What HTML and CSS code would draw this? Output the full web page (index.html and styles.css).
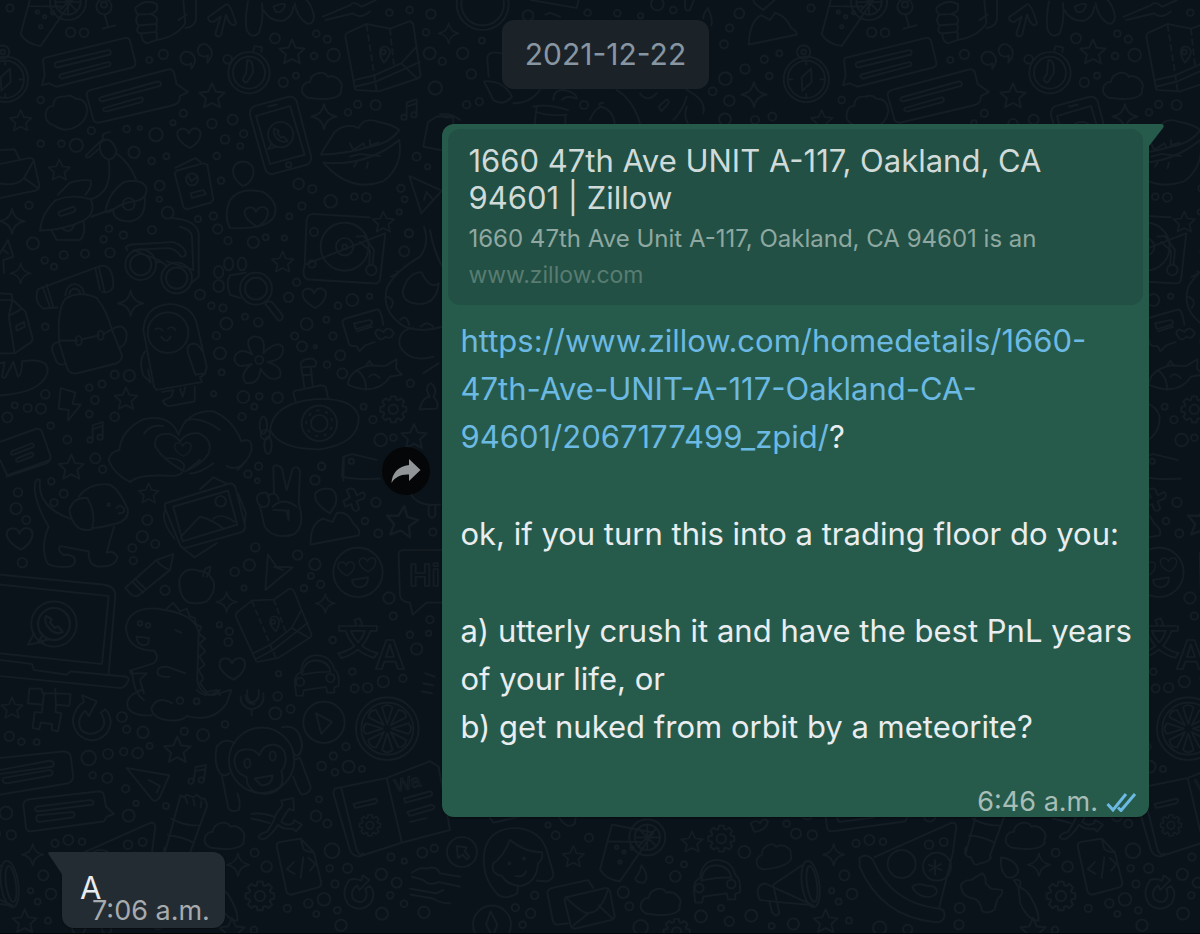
FILE: index.html
```html
<!DOCTYPE html>
<html lang="en">
<head>
<meta charset="utf-8">
<meta name="viewport" content="width=device-width, initial-scale=1">
<title>Chat</title>
<link rel="stylesheet" href="styles.css">
</head>
<body>
<svg class="wallpaper" aria-hidden="true">
  <defs>
    <path id="star" d="M0-40L11-15 38-12 18 6 24 32 0 19-24 32-18 6-38-12-11-15z"/>
    <path id="spark" d="M0-38Q5-5 38 0Q5 5 0 38Q-5 5-38 0Q-5-5 0-38z"/>
    <path id="heart" d="M4 30C-46 4-40-28-18-28Q-4-28 0-14Q8-32 25-28C46-20 35 14 4 30z"/>
    <g id="note"><path d="M-8 22V-20L22-30V14M-8-8L22-18"/><circle cx="-16" cy="24" r="8"/><circle cx="14" cy="16" r="8"/></g>
    <path id="cloud" d="M-45 35C-75 20-60-15-38-12C-35-40 5-50 15-28C40-35 65-10 55 10C60 35 20 46-45 35z"/>
    <g id="gear"><path d="M39-7L39 7 29 9 27 14 33 23 23 33 14 27 9 29 7 39-7 39-9 29-14 27-23 33-33 23-27 14-29 9-39 7-39-7-29-9-27-14-33-23-23-33-14-27-9-29-7-39 7-39 9-29 14-27 23-33 33-23 27-14 29-9z"/><circle r="14"/></g>
    <g id="phone"><circle r="40"/><path d="M-28 28L-40 46-14 38M-20-20C-30 0 0 32 22 20L10 6 2 10-10-4-6-12z"/></g>
    <g id="chat-left"><path d="M-132-32L110-92Q122-94 126-84L142-20Q144-8 134-4L-94 54-118 44-138 50-130 20-134-16Q-136-28-132-32zM-98-18L62-56Q72-54 66-42L-92-4Q-104-6-98-18zM-84 18L62-20Q72-16 64-8L-78 30Q-90 26-84 18z"/></g>
    <g id="chat-right"><path d="M-128-18L106-80Q118-82 122-70L130-36 164-12 140 0 138 14Q130 26 118 28L-102 80Q-118 80-120 70L-140-2Q-140-14-128-18zM-98 4L74-44Q88-42 80-30L-94 16Q-108 12-98 4zM-88 36L24 4Q32 6 26 18L-80 46Q-96 46-88 36z"/></g>
    <g id="map"><path d="M-106-78L-48-104 22-90 80-112Q90-110 92-102L114 50Q112 58 104 60L-10 98-78 94Q-84 92-84 84L-112-66Q-112-74-106-78zM-84 64L-24 50 56 14 98-32M-82 84L-18 68 112 10M56 14L102 58"/><path stroke-dasharray="16 14" d="M-48-100L-18 96M22-88L34 20"/><path d="M4 12C-30-36 16-50 22-22Q22-8 4 12z"/><circle cx="2" cy="-20" r="7"/></g>
    <g id="car"><path d="M-62 14Q-66-14-44-24Q-38-76 4-78Q50-78 62-34Q80-20 76 18L62 24V40H40L36 22-34 32-38 50H-58zM-40-16Q-34-62 4-62Q44-60 50-26Q0-26-40-16z"/><circle cx="-46" cy="6" r="13"/><circle cx="50" cy="-6" r="13"/></g>
    <g id="doc"><path d="M-58-62Q-58-72-48-74L14-84 54-42 76 48Q76 58 68 62L-14 84Q-24 84-28 76zM14-84L22-54Q28-46 54-42M-6-14L-28 8-4 22M22-28L14 34M38-26L58-8 42 12"/></g>
    <g id="glass"><path d="M-60-104L64-80-36 66Q-80 60-96 30zM-74-54L26-52"/><circle cx="46" cy="-66" r="54"/><circle cx="46" cy="-66" r="38"/><path d="M46-100V-32M12-66H80M22-90L70-42M22-42L70-90"/><circle cx="-46" cy="-36" r="5"/><circle cx="-24" cy="-22" r="5"/><circle cx="-36" cy="8" r="5"/><circle cx="0" cy="-34" r="5"/></g>
    <g id="compass"><circle r="68"/><circle r="56"/><circle cx="-8" cy="-82" r="20"/><circle cx="-8" cy="-82" r="7"/><path d="M14-32L16 8-12 34-14-6zM0-54V-44M52 0H42M0 54V44M-52 0H-42"/></g>

    <g id="doodles" class="doodles">
      <g transform="scale(.3333)">
        <use href="#glass" x="158" y="72"/>
        <circle cx="312" cy="20" r="23"/><circle cx="312" cy="14" r="9"/><path d="M314 44L324 80M308 86L346 76"/>
        <path d="M410 20Q440-4 470 12 478 36 450 42L414 44Q400 26 410 20zM414 44Q402 66 416 76L468 72Q480 50 450 42M416 76Q404 100 424 100L466 96Q474 84 468 72M424 100Q424 126 442 130L470 120V98M470 120Q530 110 556 70L550 0M536 60L560 44M556 84Q590 80 588 50V0"/>
        <path d="M624 52L680 12Q692 14 708 70 700 84 686 64L678 44 664 104Q654 116 646 102L662 50 640 66Q624 66 624 52z"/>
        <path d="M744 4Q734 60 740 90 754 118 776 100 792 60 786 10M790 30Q810 66 850 62 878 50 880 20M820 20Q850 6 856 14 850 40 828 36zM884 10Q890 50 920 70 940 76 942 50 938 20 920 0"/>
        <path d="M968 50L1050 16Q1060 0 1084 20L1128 0M976 60L1060 40Q1080 60 1110 34"/>
        <use href="#chat-left" x="264" y="206"/><use href="#chat-right" x="400" y="288"/>
        <path d="M574 206Q588 190 584 174 574 150 552 156 534 170 546 188 560 200 574 190zM622 188Q640 168 634 150 620 124 600 136 586 152 600 166 614 174 624 166z"/>
        <use href="#compass" x="16" y="238"/>
        <circle cx="747" cy="218" r="62"/><circle cx="747" cy="218" r="48"/><path d="M742 180Q762 180 758 220L740 248Q720 244 738 222zM760 152L764 138 786 142 784 156"/><circle cx="683" cy="178" r="13"/>
        <use href="#star" x="876" y="158"/><use href="#star" x="636" y="290"/><use href="#cloud" x="968" y="258"/><use href="#map" x="1148" y="176"/>
        <path d="M166 378Q130 366 138 336 142 318 160 318 160 286 196 290 212 282 226 296 260 296 262 334 256 370 220 384 190 396 166 378z"/>
        <use href="#star" transform="translate(62 364)scale(.85)"/><use href="#star" transform="translate(178 512)scale(.85)"/>
        <use href="#heart" x="566" y="414"/><use href="#spark" x="972" y="350"/><use href="#note" x="1228" y="328"/>
        <path d="M764 318L868 290Q884 290 890 304L934 472Q934 486 922 494L818 522Q802 524 796 508L750 346Q748 324 764 318zM768 348L870 318 914 464 810 492zM804 320L830 314"/><use href="#phone" transform="translate(842 404)scale(.95)"/><circle cx="866" cy="494" r="8"/>
        <path d="M962 464Q976 440 1004 396 1040 366 1076 384 1090 352 1130 364 1186 376 1198 390 1170 430 1110 440 1040 462 962 464zM970 488Q1100 500 1198 420 1210 500 1150 544 1050 580 970 488zM1050 430L1060 450 1090 430 1096 444M1110 420V436L1136 428M1050 470L1080 462 1140 468M1062 500L1070 488M1100 504L1104 488"/>
        <path d="M0 450L44 448 60 480M0 492L88 474Q100 474 102 484L118 556Q116 570 106 572L0 594M102 480L72 534 116 566M0 550Q50 560 72 534"/>
        <path d="M258 466L310 416Q300 400 330 396M258 466Q256 476 270 470L300 444M300 430Q330 400 350 452 344 480 322 478 296 466 300 430zM350 460Q390 490 408 538M326 480Q340 580 272 598M174 584L210 548Q250 536 272 542 278 560 256 584M120 692Q124 640 168 600 220 580 272 598 290 640 250 662 190 690 120 692zM176 636L220 620Q232 630 220 636L184 648Q172 646 176 636zM250 662Q260 700 240 720H170L154 690M274 650L344 626M316 636Q324 580 372 546 430 534 440 566 440 600 400 604 370 606 328 636zM340 632Q340 664 392 664 440 656 434 590"/><circle cx="386" cy="612" r="18"/><path d="M188 686Q210 704 222 676"/>
        <path d="M530 512L610 490 622 494 640 600 632 608 562 628Q552 628 550 620L524 520zM526 504L586 474 602 486M572 580L610 570 618 582 576 594z"/><circle cx="576" cy="538" r="18"/><path d="M566 530L574 544 592 530"/>
        <path d="M728 558Q690 530 702 500 716 478 744 488 768 500 758 530 746 556 728 558zM690 684Q670 650 690 600 720 560 790 576 840 610 822 650 800 690 690 684z"/><use href="#heart" x="768" y="650"/>
        <path d="M1228 528L1326 572 1264 640zM1272 600L1280 576 1300 600"/>
        <path d="M1270 440L1284 366 1310 350 1360 348M1270 440L1330 452"/>
        <use href="#spark" x="36" y="664"/>
        <circle cx="30" cy="24" r="11"/><circle cx="212" cy="97" r="14"/><circle cx="252" cy="98" r="13"/><circle cx="448" cy="180" r="9"/><circle cx="490" cy="163" r="14"/><circle cx="825" cy="115" r="15"/><circle cx="942" cy="168" r="10"/><circle cx="1001" cy="165" r="19"/><circle cx="850" cy="247" r="14"/><circle cx="888" cy="227" r="9"/><circle cx="949" cy="101" r="10"/><circle cx="982" cy="118" r="11"/><circle cx="1168" cy="38" r="10"/><circle cx="1229" cy="30" r="10"/><circle cx="1293" cy="42" r="14"/><circle cx="1289" cy="160" r="18"/><circle cx="1278" cy="97" r="10"/><circle cx="1327" cy="184" r="11"/><circle cx="1306" cy="264" r="20"/><circle cx="122" cy="300" r="10"/><circle cx="122" cy="431" r="10"/><circle cx="184" cy="431" r="10"/><circle cx="229" cy="436" r="20"/><circle cx="274" cy="392" r="11"/><circle cx="380" cy="387" r="10"/><circle cx="419" cy="384" r="6"/><circle cx="468" cy="404" r="20"/><circle cx="402" cy="457" r="17"/><circle cx="550" cy="340" r="11"/><circle cx="519" cy="368" r="8"/><circle cx="636" cy="371" r="14"/><circle cx="698" cy="359" r="15"/><circle cx="675" cy="418" r="13"/><circle cx="731" cy="401" r="11"/><circle cx="721" cy="438" r="9"/><circle cx="650" cy="468" r="10"/><circle cx="499" cy="469" r="9"/><circle cx="455" cy="483" r="10"/><circle cx="479" cy="557" r="15"/><circle cx="478" cy="598" r="8"/><circle cx="503" cy="638" r="18"/><circle cx="594" cy="657" r="9"/><circle cx="640" cy="648" r="11"/><circle cx="653" cy="687" r="14"/><circle cx="663" cy="542" r="10"/><circle cx="896" cy="552" r="16"/><circle cx="937" cy="567" r="12"/><circle cx="992" cy="604" r="19"/><circle cx="906" cy="618" r="11"/><circle cx="868" cy="649" r="9"/><circle cx="1063" cy="590" r="10"/><circle cx="1099" cy="592" r="13"/><circle cx="1203" cy="565" r="11"/><circle cx="1250" cy="470" r="12"/><circle cx="1283" cy="500" r="8"/><circle cx="1214" cy="598" r="9"/><circle cx="1198" cy="636" r="8"/><circle cx="1073" cy="313" r="11"/><circle cx="1127" cy="315" r="15"/><circle cx="1044" cy="337" r="10"/><circle cx="87" cy="616" r="11"/><circle cx="327" cy="686" r="10"/><circle cx="456" cy="690" r="12"/><circle cx="1227" cy="700" r="12"/>
      </g>
      <g transform="translate(0 230)scale(.3333)">
        <path d="M914 104L920-30Q922-48 940-48L1110-38M1156 10L1140 150Q1136 162 1122 160L922 148Q904 140 914 104z"/><circle cx="1034" cy="50" r="72"/><circle cx="1034" cy="50" r="26"/><circle cx="1034" cy="50" r="7"/><circle cx="936" cy="102" r="11"/><circle cx="942" cy="6" r="12"/><circle cx="1114" cy="120" r="16"/><path d="M1070 20L1092 18 1122 60 1118 104M1080 36L1110 62 1108 104"/><use href="#star" transform="translate(1150-22)scale(.85)"/>
        <path d="M114 178L300 108Q340 100 340 170 330 192 306 186M114 178Q100 214 130 236L172 232M128 170L150 232M140 164L160 232M286 114L300 180M296 110L314 186M196 196Q200 162 224 162 250 166 252 192M208 192Q212 176 226 176 240 180 240 190"/>
        <path d="M178 340Q170 240 196 206 240 180 290 204 320 240 336 300L366 376Q366 392 350 400L230 430Q208 432 202 416zM178 332L232 332M246 328L296 316M310 312L336 298Q370 276 380 310 382 340 362 352M176 336Q150 340 158 366L170 396Q180 408 194 402"/><ellipse cx="236" cy="332" rx="9" ry="14"/><ellipse cx="302" cy="316" rx="9" ry="14"/>
        <circle cx="422" cy="104" r="46"/><circle cx="422" cy="104" r="32"/><circle cx="530" cy="144" r="46"/><circle cx="530" cy="144" r="32"/><path d="M468 98Q486 90 500 110M382 60Q370 50 392 44L520 36Q556 50 558 72 550 86 540 76 526 54 500 54L400 60 480 92M516-36Q590-30 596 10V140L576 158M576 20L580 120 500 94M540-10Q576 0 576 20"/>
        <use href="#spark" x="392" y="220"/><use href="#spark" transform="translate(62 130)scale(.8)"/>
        <path d="M0 70L24 30 40 80 10 90 12 130M10 60L24 70"/>
        <path d="M462 470L430 300Q436 226 510 222 576 226 590 280L620 410Q618 436 600 442L606 456 470 480zM436 364Q414 390 430 436L452 458 444 420M566 346Q560 360 566 376L586 434 616 430 M566 346Q590 330 606 362M486 486L520 480 514 500 488 512Q494 528 510 528L584 514V470M540 476L548 500 556 472"/><circle cx="504" cy="308" r="61"/><path d="M466 298Q480 290 488 302M504 296Q520 286 526 300M484 320Q500 344 512 320"/>
        <circle cx="768" cy="176" r="48"/><circle cx="768" cy="176" r="33"/><path d="M796 222Q800 210 816 216L848 256Q850 272 836 272zM738 128L690 136Q676 160 690 194L720 204"/><ellipse cx="686" cy="102" rx="14" ry="19"/><ellipse cx="726" cy="102" rx="13" ry="19"/><ellipse cx="656" cy="126" rx="14" ry="18"/><ellipse cx="656" cy="168" rx="16" ry="18"/>
        <use href="#star" transform="translate(848 98)scale(.85)"/><use href="#heart" x="942" y="204"/>
        <path d="M758 374Q730 330 760 320 800 316 790 370 830 330 848 350 856 390 802 396 850 410 840 440 810 462 782 416 776 468 736 458 718 430 756 402 700 420 704 380 720 350 758 374z"/><circle cx="778" cy="390" r="12"/>
        <path d="M0 190L34 192 38 210 0 210M38 210L76 244 98 326 94 336 44 370H0M38 210L26 258 44 370M26 258L66 236M48 288L72 276 74 290 50 302z"/>
        <path d="M0 400L14 396 6 440Q16 450 22 430L40 396M40 396L54 440Q66 436 66 396M66 394Q150 380 142 430 120 490 0 496"/>
        <path d="M182 474L226 488 218 522 242 524 204 572 206 540 176 536z"/><use href="#star" transform="translate(378 508)scale(.9)"/><use href="#note" x="286" y="606"/><use href="#star" x="214" y="714"/>
        <path d="M0 636L110 596Q122 596 126 606L152 680Q150 694 140 700L20 740M36 664L96 640Q106 644 98 652L40 674Q28 676 36 664zM50 686L94 668Q106 670 96 680L54 696Q44 694 50 686z"/>
        <path d="M326 690Q330 666 358 660 364 600 430 568 510 550 536 614 560 540 640 544 700 570 724 634 760 620 754 664 740 700 712 720M432 612Q450 582 490 588M556 572Q600 556 660 600M546 720Q490 690 466 650 460 606 510 612 530 620 540 634 560 606 596 610 640 630 626 670 610 700 556 724M326 690Q340 730 390 756"/><use href="#heart" transform="translate(548 658)scale(.7)"/>
        <path d="M810 600Q820 520 940 508 1060 500 1076 560 1080 640 960 658 840 660 810 600zM880 490Q880 480 900 480L960 466Q976 466 978 474L984 504M880 490L888 516M914 476L902 400Q910 384 940 386 956 400 944 410L932 410 938 466M904 412L932 410M908 436L936 434"/><circle cx="958" cy="580" r="53"/><circle cx="958" cy="580" r="25"/><path stroke-dasharray="5 22" d="M919 580A39 39 0 1 1 997 580A39 39 0 1 1 919 580"/><ellipse cx="790" cy="586" rx="11" ry="26"/><ellipse cx="804" cy="646" rx="11" ry="26"/><circle cx="796" cy="614" r="14"/>
        <path d="M1036 266L1132 238Q1144 240 1150 284M1036 266Q1026 270 1028 280L1048 344Q1054 350 1070 348L1078 364 1096 346 1124 336M1062 280L1110 270Q1122 276 1112 284L1068 298zM1072 304L1116 290M1126 310Q1130 290 1150 306 1166 284 1182 310 1172 330 1156 320 1140 340 1126 310z"/>
        <path d="M1044 464Q1046 420 1110 406L1156 408 1190 388 1188 416 1206 434 1170 440Q1130 500 1044 464zM1070 420Q1100 440 1098 480M1098 408L1108 392 1120 408M1108 440Q1120 424 1140 444"/>
        <use href="#gear" x="1180" y="538"/><use href="#star" x="1242" y="622"/>
        <path d="M1272-10Q1290 40 1260 80 1190 120 1162 170 1140 240 1210 288 1260 310 1327 290M1208 186Q1220 130 1264 126 1290 180 1316 160 1310 220 1260 222 1210 220 1208 186zM1200 350Q1190 300 1240 294M1200 350Q1230 400 1300 380M1172 140Q1200 130 1190 124M1160 200Q1190 210 1172 234M1200 270Q1220 250 1228 286M1262 290Q1280 270 1300 290M1270 430L1316 400M1290 0Q1300 60 1327 110"/>
        <path d="M1258 538Q1270 500 1290 500 1270 470 1294 460 1316 480 1300 500 1320 520 1310 536z"/>
        <path d="M1030 752L1032 680 1056 672 1130 690"/><circle cx="1054" cy="694" r="8"/>
        <circle cx="99" cy="40" r="18"/><circle cx="134" cy="91" r="10"/><circle cx="162" cy="110" r="9"/><circle cx="191" cy="75" r="12"/><circle cx="255" cy="71" r="12"/><circle cx="330" cy="68" r="14"/><circle cx="311" cy="28" r="10"/><circle cx="370" cy="15" r="11"/><circle cx="136" cy="290" r="10"/><circle cx="600" cy="194" r="15"/><circle cx="634" cy="227" r="10"/><circle cx="669" cy="234" r="11"/><circle cx="735" cy="260" r="9"/><circle cx="775" cy="277" r="13"/><circle cx="679" cy="281" r="18"/><circle cx="649" cy="317" r="11"/><circle cx="660" cy="370" r="18"/><circle cx="665" cy="427" r="9"/><circle cx="684" cy="32" r="11"/><circle cx="760" cy="37" r="17"/><circle cx="797" cy="22" r="9"/><circle cx="853" cy="24" r="8"/><circle cx="890" cy="157" r="11"/><circle cx="866" cy="202" r="14"/><circle cx="920" cy="282" r="18"/><circle cx="979" cy="269" r="9"/><circle cx="1014" cy="227" r="10"/><circle cx="1057" cy="210" r="18"/><circle cx="1109" cy="199" r="8"/><circle cx="884" cy="318" r="11"/><circle cx="906" cy="349" r="15"/><circle cx="946" cy="350" r="5"/><circle cx="999" cy="318" r="11"/><circle cx="1021" cy="376" r="15"/><circle cx="981" cy="404" r="10"/><circle cx="1027" cy="430" r="15"/><circle cx="833" cy="503" r="16"/><circle cx="778" cy="499" r="10"/><circle cx="730" cy="501" r="18"/><circle cx="763" cy="530" r="9"/><circle cx="726" cy="560" r="11"/><circle cx="641" cy="491" r="8"/><circle cx="344" cy="434" r="12"/><circle cx="388" cy="437" r="17"/><circle cx="306" cy="462" r="11"/><circle cx="268" cy="473" r="10"/><circle cx="285" cy="510" r="12"/><circle cx="268" cy="552" r="10"/><circle cx="344" cy="560" r="13"/><circle cx="136" cy="493" r="13"/><circle cx="123" cy="536" r="15"/><circle cx="83" cy="534" r="12"/><circle cx="44" cy="526" r="9"/><circle cx="22" cy="562" r="15"/><circle cx="152" cy="587" r="10"/><circle cx="202" cy="629" r="12"/><circle cx="286" cy="685" r="15"/><circle cx="1231" cy="460" r="11"/><circle cx="1091" cy="530" r="9"/><circle cx="1119" cy="569" r="11"/><circle cx="1142" cy="630" r="19"/><circle cx="1180" cy="623" r="10"/><circle cx="1227" cy="10" r="12"/><circle cx="1213" cy="64" r="15"/><circle cx="965" cy="709" r="11"/>
      </g>
      <g transform="translate(0 460)scale(.3333)">
        <path d="M0 0L22 46 150 0M390 66Q420 40 520 48 556 44 552 14 540-6 500-6M564 28L600 0M570 40Q600 40 640 10M680 18Q710 36 736 4M1030-10L1026 50Q1060 60 1140 56"/>
        <path d="M120 60Q104 50 104 90 110 140 146 200 120 260 142 310 160 324 210 320 234 310 220 290 200 280 192 286 170 270 180 258L266 274Q264 320 300 320 350 320 352 290 340 270 320 278 330 240 342 200M120 60Q110 140 210 176M208 150Q220 110 262 114 290 160 276 208 220 220 208 150zM236 110Q270 66 330 74 360 90 384 150 386 180 350 190 300 204 276 204M350 144Q360 130 370 144 380 160 356 160"/><circle cx="326" cy="134" r="4"/>
        <use href="#heart" transform="translate(58 236)scale(1.1)"/><use href="#star" transform="translate(446 102)scale(.8)"/>
        <path d="M496 130L690 70Q700 70 706 80L736 200Q734 212 726 216L556 264Q544 264 540 254L494 142zM520 140L684 92 712 194 548 244zM600 88L640 52 682 72M550 266L584 292 650 250M496 150Q480 180 524 236M714 100L738 160 734 190M546 226L600 170Q640 180 670 206M640 176Q664 156 704 186"/><circle cx="662" cy="124" r="16"/>
        <path d="M822 100L820 20Q834 10 846 26L860 90 878 26Q896 14 900 36L896 130Q918 200 880 224 820 240 794 200L780 140M772 124Q766 96 800 98 814 120 802 138 780 148 772 124zM802 108Q830 90 836 120M818 140Q850 110 890 140M820 150L860 152 866 180M866 150V180"/>
        <path d="M990 160Q940 130 946 100 964 80 996 88 1016 104 1006 136zM932 254Q930 190 970 176L998 186 1010 160Q1040 150 1060 190 1084 210 1076 226zM1030 124L1050 112 1040 90Q1056 80 1064 90L1070 106 1090 96Q1100 106 1090 116L1070 124 1078 146Q1066 160 1058 146L1054 132 1036 140z"/>
        <use href="#star" transform="translate(1206 188)rotate(8)scale(1.25)"/><path d="M1232 100Q1250 140 1320 134M1286 134V166Q1296 180 1306 166V134"/>
        <path d="M376 384L470 300 520 282 510 330 416 406Q404 412 394 404zM396 364L430 398M404 356L438 388M470 300Q480 320 510 330"/>
        <path d="M590 330Q550 320 538 360 536 410 566 428 600 434 620 424 646 400 642 368 624 330 600 334zM610 350Q606 324 632 320 630 340 620 350"/>
        <path d="M804 284L830 320 878 322 796 390zM822 320L850 330"/>
        <use href="#spark" transform="translate(680 426)scale(.8)"/><use href="#spark" transform="translate(976 430)scale(.75)"/>
        <circle cx="1074" cy="337" r="74"/><use href="#heart" transform="translate(1038 326)scale(.7)"/><use href="#heart" transform="translate(1102 314)scale(.7)"/><path d="M1056 360L1104 352Q1104 380 1080 382 1058 380 1056 360z"/>
        <path d="M1400 270H1210Q1196 270 1196 286L1200 406Q1204 426 1230 428L1238 464 1280 428H1340"/><text x="1228" y="378" font-size="92">Hi</text>
        <path d="M0 344L310 374Q346 378 346 408L326 640M0 374L326 408 306 612 0 580M0 600L96 612 102 630 200 644 212 634 378 650Q390 654 384 664 376 684 360 684L0 648"/><use href="#phone" transform="translate(162 492)scale(1.2)"/><path d="M102 520L84 554 130 546"/><circle cx="162" cy="492" r="68"/>
        <path d="M432 720Q400 700 396 630L462 610Q480 590 462 572 380 570 378 500 390 440 470 446 590 460 596 520L592 650Q590 700 640 706L690 690M500 446L520 428 540 454M540 454L560 446 570 470 584 474 588 494 604 500 596 520 616 536 598 552 616 574 598 590 614 614 596 630 610 656 600 670 620 696 650 690 660 706M410 530L446 534Q450 556 430 556 410 552 410 530zM556 640L500 620Q466 620 474 644 490 654 508 650M390 630L392 640 440 640 420 660 432 700M526 510L544 518"/><circle cx="420" cy="490" r="7"/><circle cx="444" cy="496" r="7"/>
        <use href="#map" transform="translate(822 504)rotate(-14)scale(.92)"/><use href="#heart" transform="translate(696 626)scale(1.1)"/><use href="#car" transform="translate(944 660)scale(.95)"/>
        <text class="cjk" x="1012" y="582" font-size="124">文</text><text x="1124" y="628" font-size="126">A</text>
        <circle cx="162" cy="128" r="11"/><circle cx="154" cy="64" r="10"/><circle cx="191" cy="101" r="12"/><circle cx="54" cy="97" r="13"/><circle cx="48" cy="146" r="17"/><circle cx="79" cy="180" r="12"/><circle cx="67" cy="308" r="14"/><circle cx="308" cy="28" r="11"/><circle cx="442" cy="180" r="15"/><circle cx="427" cy="230" r="17"/><circle cx="466" cy="252" r="12"/><circle cx="397" cy="264" r="12"/><circle cx="400" cy="302" r="11"/><circle cx="495" cy="391" r="14"/><circle cx="744" cy="42" r="11"/><circle cx="776" cy="19" r="11"/><circle cx="772" cy="62" r="7"/><circle cx="945" cy="60" r="14"/><circle cx="965" cy="19" r="11"/><circle cx="1128" cy="127" r="14"/><circle cx="1095" cy="183" r="10"/><circle cx="1135" cy="220" r="12"/><circle cx="1299" cy="216" r="11"/><circle cx="766" cy="262" r="13"/><circle cx="748" cy="315" r="17"/><circle cx="704" cy="335" r="13"/><circle cx="732" cy="384" r="8"/><circle cx="893" cy="285" r="14"/><circle cx="945" cy="313" r="17"/><circle cx="933" cy="348" r="9"/><circle cx="912" cy="385" r="10"/><circle cx="962" cy="373" r="11"/><circle cx="1167" cy="414" r="17"/><circle cx="1180" cy="468" r="11"/><circle cx="1230" cy="524" r="10"/><circle cx="1250" cy="567" r="17"/><circle cx="1290" cy="479" r="11"/><circle cx="1286" cy="520" r="8"/><circle cx="998" cy="540" r="10"/><circle cx="658" cy="494" r="8"/><circle cx="688" cy="514" r="11"/><circle cx="685" cy="546" r="12"/><circle cx="836" cy="641" r="8"/><circle cx="1057" cy="635" r="10"/><circle cx="1064" cy="685" r="12"/><circle cx="1103" cy="683" r="14"/><circle cx="1150" cy="665" r="17"/><circle cx="1209" cy="655" r="11"/><path d="M1276 640L1304 650M1270 670L1300 676M1266 694L1296 700"/>
      </g>
      <g transform="translate(0 690)scale(.3333)">
        <use href="#star" transform="translate(36 56)scale(.85)"/>
        <path d="M88-4H124L128 10H166V-4M88-4L84 40 128 44 132 10M166 10L168 44 208 48 212 12 170 10M128 44L126 68 104 66 98 114 118 118 122 98 156 102V120L174 124 184 70 166 66 168 44"/>
        <path d="M240 44Q200 90 236 134 280 170 320 130 346 90 316 58L302 68Q324 100 300 122 270 142 244 120 226 90 256 62L266 78 290 34 246 16 252 36z"/>
        <path d="M424 0Q372 20 384 54 400 80 456 76M516 40Q470 14 454 56 460 90 520 92 550 90 560 78 640 100 680 40L694 0M590 0Q620 30 660 0"/>
        <path d="M722 20Q720 50 754 58 796 50 790 10M742 0Q740 40 760 36 780 30 776 0M754 58L756 76M736 16Q740 44 764 42"/>
        <circle cx="972" cy="97" r="62"/><path d="M948 70L996 96 964 132z"/>
        <circle cx="1162" cy="116" r="94"/><circle cx="1162" cy="116" r="78"/>
        <g id="seg"><path d="M1162 102L1146 52Q1162 38 1178 52z"/><path d="M1162 130L1146 180Q1162 194 1178 180z"/></g><use href="#seg" transform="rotate(45 1162 116)"/><use href="#seg" transform="rotate(90 1162 116)"/><use href="#seg" transform="rotate(135 1162 116)"/>
        <circle cx="785" cy="211" r="98"/><path d="M722 252C694 230 696 178 738 178Q764 176 778 196Q790 162 822 164C864 170 864 220 844 244Q856 280 832 300 800 320 766 306 738 290 740 262zM764 266L818 256Q816 286 784 286zM704 160Q676 140 650 170 640 220 660 250 674 262 688 250M666 260L684 350Q690 370 716 360 724 340 712 310M846 112Q880 104 896 130 916 170 896 196 888 200 880 190M884 208L900 204 932 290Q934 310 906 314 896 306 880 260"/><ellipse cx="742" cy="220" rx="9" ry="14"/><ellipse cx="818" cy="198" rx="9" ry="14"/>
        <use href="#star" transform="translate(532 182)scale(1.05)"/><use href="#note" transform="translate(592 252)rotate(8)"/>
        <path d="M380 234L508 256 480 320Q466 340 456 328zM446 270L480 288 470 308"/>
        <path d="M0 204L190 184Q210 186 212 198L220 262Q216 276 204 280L0 314M0 240L150 212Q168 216 158 230L0 252M10 264L150 240Q164 244 154 256L20 280Q2 276 10 264z"/>
        <path d="M86 328L296 304Q310 304 312 316L318 350 342 372 320 380 312 394 92 424Q80 424 78 412L70 344Q72 330 86 328zM110 350L272 330Q286 334 278 344L114 364Q98 360 110 350zM112 376L218 366Q228 372 220 382L116 396Q104 388 112 376z"/>
        <path d="M494 490L542 316 552 322 560 314 580 322 590 314 604 326 614 326 622 346 566 500M514 386Q560 410 600 406M504 436Q550 440 580 458M556 322L562 340M580 328L584 346M604 334L602 352"/>
        <path d="M260 484L452 398Q466 398 466 410L456 486"/><circle cx="384" cy="464" r="13"/><circle cx="428" cy="456" r="12"/>
        <use href="#cloud" transform="translate(676 438)"/>
        <path d="M776 440Q780 430 800 426 820 400 830 370L848 346 844 332 880 324 882 362 868 356Q850 380 844 396 860 410 880 400L882 390 906 404 888 424 880 416Q850 420 834 404 820 430 796 446 778 450 776 440zM754 372Q780 366 822 380M754 386Q780 390 810 400"/>
        <path d="M1004 296L1160 264 1290 214 1316 230 1350 420 1206 458 1076 500Q1056 496 1050 480L1000 310zM1160 264L1206 458M1024 294L1070 480Q1080 500 1090 490M1060 342L1128 326Q1136 332 1126 340L1066 354zM1212 326L1290 304Q1304 310 1292 318L1216 338zM1222 366L1296 344Q1310 350 1298 358L1228 378zM1230 396L1280 384"/><use href="#gear" transform="translate(1110 406)scale(.8)"/><text class="thin" transform="translate(1188 306)rotate(-13)" font-size="54">Wa</text>
        <use href="#spark" transform="translate(98 494)scale(.85)"/><use href="#spark" transform="translate(714 524)scale(.9)"/><use href="#doc" x="888" y="530"/><use href="#gear" transform="translate(780 618)scale(1.1)"/>
        <path d="M1048 570Q1020 610 1046 644 1080 670 1112 640 1130 610 1110 588L1096 596Q1106 620 1090 634 1070 640 1058 624 1050 600 1072 586L1078 600 1108 570 1088 556 1084 572Q1064 564 1048 570z"/>
        <path d="M1236 548Q1260 530 1280 536 1310 526 1320 550L1380 560M1236 560L1270 570Q1290 590 1316 576L1380 590M1230 596L1310 610 1330 600M1232 614L1300 626Q1320 640 1350 640"/>
        <use href="#star" transform="translate(74 696)scale(.95)"/>
        <circle cx="28" cy="139" r="14"/><circle cx="64" cy="155" r="10"/><circle cx="110" cy="156" r="9"/><circle cx="366" cy="81" r="15"/><circle cx="380" cy="118" r="11"/><circle cx="429" cy="127" r="17"/><circle cx="266" cy="204" r="22"/><circle cx="324" cy="192" r="15"/><circle cx="371" cy="185" r="11"/><circle cx="413" cy="189" r="16"/><circle cx="449" cy="168" r="9"/><circle cx="278" cy="256" r="10"/><circle cx="322" cy="264" r="15"/><circle cx="377" cy="296" r="11"/><circle cx="408" cy="340" r="8"/><circle cx="386" cy="377" r="18"/><circle cx="498" cy="348" r="9"/><circle cx="553" cy="124" r="11"/><circle cx="609" cy="135" r="18"/><circle cx="675" cy="103" r="10"/><circle cx="826" cy="70" r="18"/><circle cx="872" cy="57" r="12"/><circle cx="833" cy="19" r="13"/><circle cx="540" cy="32" r="10"/><circle cx="590" cy="34" r="9"/><circle cx="1038" cy="170" r="11"/><circle cx="1000" cy="198" r="11"/><circle cx="965" cy="228" r="13"/><circle cx="1005" cy="247" r="10"/><circle cx="1046" cy="230" r="18"/><circle cx="1086" cy="237" r="9"/><circle cx="957" cy="328" r="9"/><circle cx="948" cy="378" r="16"/><circle cx="982" cy="401" r="12"/><circle cx="996" cy="482" r="22"/><circle cx="989" cy="535" r="10"/><circle cx="1043" cy="535" r="14"/><circle cx="1005" cy="582" r="11"/><circle cx="972" cy="628" r="19"/><circle cx="925" cy="640" r="13"/><circle cx="862" cy="655" r="11"/><circle cx="949" cy="672" r="9"/><circle cx="1012" cy="661" r="10"/><circle cx="1144" cy="553" r="17"/><circle cx="1190" cy="578" r="15"/><circle cx="1173" cy="501" r="11"/><circle cx="1213" cy="513" r="8"/><circle cx="1267" cy="488" r="15"/><circle cx="1303" cy="475" r="11"/><circle cx="1171" cy="616" r="10"/><circle cx="1212" cy="641" r="10"/><circle cx="1146" cy="671" r="18"/><circle cx="1272" cy="667" r="17"/><circle cx="1023" cy="706" r="17"/><circle cx="764" cy="488" r="12"/><circle cx="800" cy="530" r="16"/><circle cx="18" cy="369" r="19"/><circle cx="34" cy="435" r="14"/><circle cx="165" cy="460" r="11"/><circle cx="205" cy="450" r="15"/><circle cx="246" cy="455" r="10"/><circle cx="130" cy="556" r="15"/><circle cx="92" cy="602" r="8"/><circle cx="153" cy="612" r="16"/><circle cx="113" cy="635" r="9"/><circle cx="144" cy="692" r="9"/>
      </g>
      <g transform="translate(0 770)scale(.3333)">
        <path d="M176 264Q196 248 216 270 270 400 414 416 434 420 430 440 424 460 400 456 240 440 176 290zM220 262L260 244M456 246L414 416M334 350Q350 336 380 348 406 346 408 366 400 384 370 380 340 370 334 350z"/><circle cx="302" cy="282" r="42"/><circle cx="408" cy="290" r="42"/><path d="M402 270V314M384 284L422 300M386 302L420 282M494 232Q486 260 510 262 520 294 536 280 564 276 570 262"/>
        <path d="M480 344Q490 330 510 330L544 310Q556 320 554 340L570 356 604 360Q606 374 590 386L580 420Q560 432 544 424 536 390 520 386 480 380 480 344z"/><path d="M600 262Q650 270 652 306 640 330 616 320 596 300 600 262zM638 330Q650 326 658 334L658 352M638 330L652 350 658 400Q680 450 712 452 716 430 694 390 680 360 652 350"/>
        <circle cx="476" cy="414" r="15"/><circle cx="474" cy="464" r="14"/><circle cx="236" cy="474" r="20"/><circle cx="320" cy="478" r="14"/><circle cx="762" cy="480" r="10"/><use href="#star" x="696" y="484"/>
      </g>
      <g transform="translate(440 810)scale(.3333)">
        <circle cx="66" cy="126" r="45"/><path d="M50 108L80 112 74 124 88 140 80 148 68 134 54 144z"/>
        <path d="M234 228L232 250Q200 270 176 256 120 200 134 120 150 54 230 54 300 60 320 120L340 190Q340 210 320 214L290 212M210 90Q190 140 160 160 150 190 186 198 200 224 240 228 290 220 294 160 310 150 306 126 260 130 210 90M226 198Q250 204 258 184"/><circle cx="208" cy="160" r="3"/><circle cx="252" cy="146" r="3"/>
        <use href="#star" transform="translate(400 142)scale(.85)"/><use href="#star" transform="translate(756 98)scale(.85)"/><use href="#gear" x="844" y="86"/><use href="#glass" x="576" y="148"/>
        <path d="M604 166Q630 200 612 218 590 220 586 204 600 190 604 166z"/><use href="#cloud" x="664" y="276"/><use href="#cloud" transform="translate(1002 138)rotate(-14)scale(.9)"/>
        <path d="M384 340L350 344Q340 340 338 330L322 248Q324 238 336 234L444 210 460 234M378 262L496 234Q508 234 510 244L524 318Q524 326 514 330L406 356Q396 356 392 346L374 274Q372 264 378 262zM380 266Q440 320 448 308 480 310 504 240M448 308L400 346M476 286L516 324"/>
        <use href="#car" x="824" y="228"/>
        <path d="M1000 224L1086 166M1120 286L1014 276 960 270Q940 230 974 220zM1000 224L1018 310Q1008 324 996 306L988 274"/><ellipse cx="1112" cy="222" rx="26" ry="70" transform="rotate(-8 1112 222)"/><ellipse cx="1116" cy="222" rx="15" ry="54" transform="rotate(-8 1116 222)"/>
        <circle cx="156" cy="344" r="57"/><path d="M152 304L172 344 158 380 138 344z"/><use href="#gear" x="710" y="366"/>
        <path d="M150 24L160 38 240 20M356 20Q380 60 404 42L408 20M932 40Q950 26 960 40 970 20 984 34 980 60 944 66z"/>
        <circle cx="226" cy="293" r="11"/><circle cx="272" cy="310" r="14"/><circle cx="248" cy="344" r="10"/><circle cx="284" cy="256" r="11"/><circle cx="324" cy="45" r="8"/><circle cx="347" cy="76" r="12"/><circle cx="447" cy="83" r="12"/><circle cx="550" cy="247" r="17"/><circle cx="568" cy="289" r="12"/><circle cx="688" cy="149" r="10"/><circle cx="706" cy="199" r="16"/><circle cx="732" cy="163" r="9"/><circle cx="783" cy="319" r="18"/><circle cx="843" cy="294" r="9"/><circle cx="868" cy="334" r="14"/><circle cx="934" cy="317" r="18"/><circle cx="995" cy="348" r="9"/><circle cx="1060" cy="342" r="17"/><circle cx="913" cy="126" r="18"/><circle cx="1068" cy="71" r="15"/><circle cx="1040" cy="41" r="10"/><circle cx="602" cy="352" r="22"/>
      </g>
      <g transform="translate(440 0)scale(.3333)">
        <circle cx="128" cy="12" r="78"/><circle cx="128" cy="12" r="64"/><use href="#spark" transform="translate(26 100)scale(.8)"/>
        <path d="M272 0L410 24 416 0M186 160Q140 150 142 180L146 230M132 244Q190 240 216 290 190 320 160 300zM220 310Q270 310 300 270M280 320Q320 310 384 330M290 320L284 370M290 336Q330 350 380 344M376 350V370M340 300Q340 270 370 270 410 276 410 296 380 284 366 300M450 360Q460 330 482 320 520 330 524 370M482 320Q470 310 490 308M530 270Q580 300 600 370M600 280Q620 310 650 280M656 320L680 298Q690 304 684 312L664 334zM740 320Q730 350 744 370M740 270Q800 300 790 340M700 360Q730 330 740 290"/>
        <path d="M0 344Q30 336 60 360M12 352H40V370M736 0Q730 40 750 30L762 0M804 24Q820 60 814 76M804 24Q790 40 790 56M316 44L330 38 360 50M970 30Q940 10 940 0M970 30L1004 0M926 134Q930 60 964 46L990 60 1006 38Q1040 50 1054 84 1072 94 1070 104z"/>
        <use href="#spark" x="942" y="284"/>
        <circle cx="652" cy="12" r="19"/><circle cx="700" cy="30" r="10"/><circle cx="532" cy="40" r="10"/><circle cx="443" cy="38" r="10"/><circle cx="264" cy="47" r="16"/><circle cx="602" cy="47" r="8"/><circle cx="68" cy="160" r="17"/><circle cx="126" cy="122" r="9"/><circle cx="94" cy="222" r="14"/><circle cx="80" cy="314" r="11"/><circle cx="118" cy="305" r="11"/><circle cx="432" cy="315" r="12"/><circle cx="898" cy="40" r="15"/><circle cx="869" cy="84" r="11"/><circle cx="852" cy="133" r="12"/><circle cx="973" cy="178" r="11"/><circle cx="1018" cy="160" r="9"/><circle cx="915" cy="207" r="14"/><circle cx="988" cy="228" r="10"/><circle cx="856" cy="236" r="19"/><circle cx="818" cy="274" r="12"/><circle cx="868" cy="302" r="16"/><circle cx="855" cy="358" r="18"/><circle cx="945" cy="360" r="12"/><circle cx="997" cy="350" r="12"/>
      </g>
    </g>
    <pattern id="tile" width="801" height="1200" patternUnits="userSpaceOnUse">
      <use href="#doodles"/><use href="#doodles" x="-801"/><use href="#doodles" x="801"/>
    </pattern>
  </defs>
  <rect width="100%" height="100%" fill="url(#tile)"/>
</svg>

<main class="chat">
  <time class="date" datetime="2021-12-22">2021-12-22</time>

  <div class="row row-out">
    <button class="forward" type="button" aria-label="Forward message">
      <svg width="30" height="26" viewBox="0 0 30 26" aria-hidden="true"><path d="M18 1 29.500 12 18 23V16.500C10 16 4 19 .5 25 1 15.500 7 8 18 7z"/></svg>
    </button>
    <article class="bubble bubble-out">
      <svg class="tail tail-out" width="15" height="22" viewBox="0 0 15 22" aria-hidden="true"><path d="M0 0H12Q16 0 14 4L0 22z"/></svg>
      <section class="preview">
        <h2 class="preview-title">1660 47th Ave UNIT A-117, Oakland, CA 94601 | Zillow</h2>
        <p class="preview-text">1660 47th Ave Unit A-117, Oakland, CA 94601 is an</p>
        <p class="preview-site">www.zillow.com</p>
      </section>
      <div class="text">
        <p><a class="link" href="https://www.zillow.com/homedetails/1660-47th-Ave-UNIT-A-117-Oakland-CA-94601/2067177499_zpid/">https://www.zillow.com/homedetails/1660-<wbr>47th-Ave-UNIT-A-117-Oakland-CA-<wbr>94601/2067177499_zpid/</a>?</p>
        <p>ok, if you turn this into a trading floor do you:</p>
        <p>a) utterly crush it and have the best PnL years of your life, or<br>b) get nuked from orbit by a meteorite?</p>
      </div>
      <footer class="meta">
        <time>6:46 a.m.</time>
        <svg class="ticks" width="31" height="20" viewBox="0 0 31 20" role="img" aria-label="Read"><path d="M1.500 12 7 18 20 2M12 15.500 15 18.500 29 2"/></svg>
      </footer>
    </article>
  </div>

  <div class="row">
    <article class="bubble bubble-in">
      <svg class="tail tail-in" width="14" height="22" viewBox="0 0 14 22" aria-hidden="true"><path d="M14 0H2Q-1 0 1 3L14 22z"/></svg>
      <p>A</p>
      <footer class="meta meta-in"><time>7:06 a.m.</time></footer>
    </article>
  </div>
</main>
</body>
</html>
```
FILE: styles.css
```css
* {
  box-sizing: border-box;
}

body {
  position: relative;
  margin: 0;
  min-height: 100vh;
  background: #0b131a;
  color: #e9edef;
  font-family: Inter, "Liberation Sans", sans-serif;
}

p,
h2 {
  margin: 0;
  font-weight: 400;
}

.wallpaper {
  position: absolute;
  top: 0;
  left: 0;
  width: 100%;
  height: 100%;
}

.doodles {
  fill: none;
  stroke: #151d24;
  stroke-width: 5;
  stroke-linecap: round;
  stroke-linejoin: round;
  font-family: "Liberation Sans", sans-serif;
  font-weight: 700;
}

.cjk {
  font-family: "Noto Sans CJK SC", sans-serif;
}

.thin {
  font-weight: 400;
  stroke-width: 3;
}

.chat {
  position: relative;
  display: flex;
  flex-direction: column;
  gap: 35px;
  min-height: 100vh;
  padding: 20px 51px 5px 62px;
  border-bottom: 1px solid #04070a;
}

.date {
  align-self: center;
  padding: 0 23px;
  border-radius: 12px;
  background: #1b2329;
  color: #8796a1;
  font-size: 30px;
  line-height: 69px;
}

.row {
  display: flex;
  align-items: center;
  gap: 12px;
}

.row-out {
  justify-content: flex-end;
}

.forward {
  display: grid;
  place-items: center;
  flex: none;
  width: 48px;
  height: 48px;
  padding: 0;
  border: 0;
  border-radius: 50%;
  background: #040607;
  fill: #929597;
}

.bubble {
  position: relative;
  border-radius: 12px;
  font-size: 31px;
  line-height: 48px;
  box-shadow: 0 1px 2px #0006;
}

.bubble-out {
  width: 65%;
  padding: 5px 6px 0;
  border-top-right-radius: 0;
  background: #265b4b;
}

.bubble-in {
  padding: 12px 15px 2px 18px;
  border-top-left-radius: 0;
  background: #242c33;
}

.tail {
  position: absolute;
  top: 0;
}

.tail-out {
  left: 100%;
  fill: #265b4b;
}

.tail-in {
  right: 100%;
  fill: #242c33;
}

.preview {
  padding: 13px 20px 11px;
  border-radius: 12px;
  background: #225044;
}

.preview-title {
  color: #d0dbd9;
  font-size: 31px;
  line-height: 37px;
}

.preview-text,
.preview-site {
  line-height: 37px;
}

.preview-text {
  margin-top: 4px;
  color: #8fa8a1;
  font-size: 24px;
}

.preview-site {
  color: #597c72;
  font-size: 23px;
}

.text {
  display: grid;
  gap: 49px;
  padding: 12px 8px 0 12px;
}

.link {
  color: #6cb9e3;
  text-decoration: none;
}

.meta {
  display: flex;
  justify-content: flex-end;
  align-items: center;
  gap: 8px;
  margin-top: 36px;
  padding-right: 6px;
  color: #a8bdb7;
  font-size: 27px;
  line-height: 30px;
}

.meta-in {
  margin-top: -16px;
  padding: 0 0 0 12px;
  color: #a7abae;
}

.ticks {
  fill: none;
  stroke: #6cb9e3;
  stroke-width: 3;
}
```
